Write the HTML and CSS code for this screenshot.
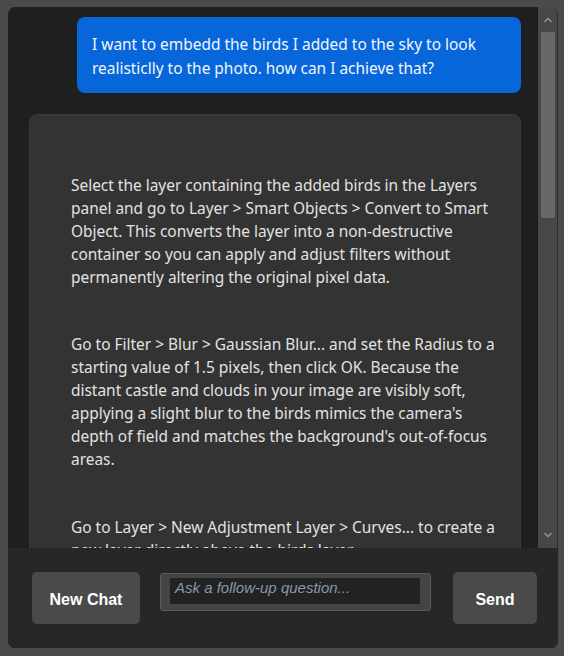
FILE: index.html
```html
<!DOCTYPE html>
<html lang="en">
  <head>
    <meta charset="UTF-8" />
    <meta name="viewport" content="width=device-width, initial-scale=1" />
    <title>chat</title>
    <link rel="stylesheet" href="styles.css">
  </head>
  <body>
    <div class="panel">
      <div class="chatArea">
        <div class="messages">
          <div class="bubble user">
            I want to embedd the birds I added to the sky to look realisticlly
            to the photo. how can I achieve that?
          </div>
          <div class="bubble assistant">
            <p class="first">
              Select the layer containing the added birds in the Layers panel
              and go to Layer &gt; Smart Objects &gt; Convert to Smart Object.
              This converts the layer into a non-destructive container so you
              can apply and adjust filters without permanently altering the
              original pixel data.
            </p>
            <p class="second">
              Go to Filter &gt; Blur &gt; Gaussian Blur... and set the Radius to
              a starting value of 1.5 pixels, then click OK. Because the distant
              castle and clouds in your image are visibly soft, applying a slight
              blur to the birds mimics the camera's depth of field and matches
              the background's out-of-focus areas.
            </p>
            <p class="third">
              Go to Layer &gt; New Adjustment Layer &gt; Curves... to create a
              new layer directly above the birds layer.
            </p>
          </div>
        </div>
        <div class="scrollbar">
          <svg class="arrow up" width="12" height="8" viewBox="0 0 12 8">
            <path d="M2.5 6 L6 2.5 L9.5 6" fill="none" stroke="#9a9a9a" stroke-width="1.3" />
          </svg>
          <div class="track">
            <div class="thumb"></div>
          </div>
          <svg class="arrow down" width="12" height="8" viewBox="0 0 12 8">
            <path d="M2.5 2 L6 5.5 L9.5 2" fill="none" stroke="#9a9a9a" stroke-width="1.3" />
          </svg>
        </div>
      </div>
      <div class="bottomBar">
        <button class="actionBtn newChat">New Chat</button>
        <div class="inputBox">
          <textarea class="question" placeholder="Ask a follow-up question..."></textarea>
        </div>
        <button class="actionBtn send">Send</button>
      </div>
    </div>
  </body>
</html>
```

FILE: styles.css
```css
body {
  margin: 0;
  padding: 7px 6px 8px 8px;
  background: #4b4b4b;
  font-family: "Segoe UI", "Noto Sans", sans-serif;
}
.panel {
  width: 550px;
  height: 641px;
  background: #1f1f1f;
  border-radius: 7px;
  overflow: hidden;
  display: flex;
  flex-direction: column;
}
.chatArea {
  height: 541px;
  display: flex;
}
.messages {
  flex: 1;
  overflow: hidden;
  padding-top: 10px;
  display: flex;
  flex-direction: column;
  gap: 21px;
}
.bubble {
  border-radius: 8px;
  font-size: 15.45px;
}
.user {
  margin: 0 17px 0 69px;
  background: #0866db;
  color: #f2f6ff;
  padding: 15px 15px 13px;
  line-height: 24px;
}
.assistant {
  margin: 0 17px 0 21px;
  background: #333333;
  border: 1px solid #3a3a3a;
  color: #e2e2e2;
  padding: 20px 21px 20px 41px;
  line-height: 23px;
}
.assistant p {
  margin: 0;
}
.assistant .first {
  margin-top: 39px;
}
.assistant .second {
  margin-top: 44px;
}
.assistant .third {
  margin-top: 45px;
}
/* fake scrollbar on the right of the chat */
.scrollbar {
  width: 19px;
  background: #474747;
  border-right: 1px solid #2c2c2c;
  display: flex;
  flex-direction: column;
  align-items: center;
}
.arrow.up {
  margin: 9px 0 8px;
}
.arrow.down {
  margin: 6px 0 9px;
}
.track {
  flex: 1;
  width: 100%;
}
.thumb {
  margin: 0 2px 0 3px;
  height: 186px;
  background: #686868;
  border-radius: 1px;
}
.bottomBar {
  flex: 1;
  background: #272727;
  display: flex;
  align-items: flex-start;
  padding: 24px 21px 0 24px;
  gap: 20px;
}
.actionBtn {
  height: 52px;
  background: #4a4a4a;
  border: none;
  border-radius: 5px;
  color: #ffffff;
  font-family: "Liberation Sans", Arial, sans-serif;
  font-weight: bold;
  font-size: 16px;
  padding: 3px 0 0;
}
.newChat {
  width: 108px;
}
.send {
  width: 84px;
  margin-left: auto;
}
.inputBox {
  width: 271px;
  height: 38px;
  margin-top: 1px;
  box-sizing: border-box;
  background: #444444;
  border: 1px solid #5a5a5a;
  border-radius: 3px;
  padding: 4px 10px 6px 9px;
}
.question {
  display: block;
  width: 100%;
  height: 26px;
  box-sizing: border-box;
  margin: 0;
  border: none;
  background: #222222;
  resize: none;
  padding: 1px 5px;
  font-family: "Liberation Sans", Arial, sans-serif;
  font-style: italic;
  font-size: 15px;
  color: #dddddd;
  outline: none;
}
.question::placeholder {
  color: #8a98a6;
}
```
